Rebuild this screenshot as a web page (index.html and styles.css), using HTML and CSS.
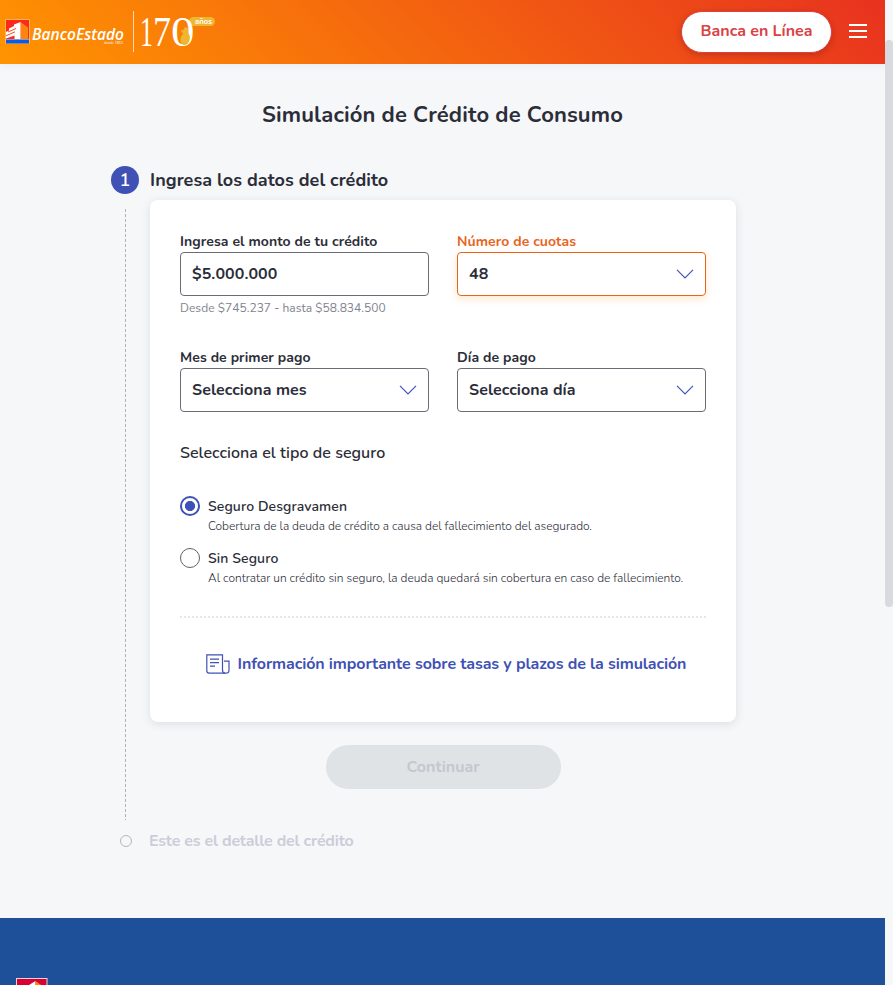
FILE: index.html
```html
<!DOCTYPE html>
<html lang="es">
<head>
<meta charset="utf-8">
<title>Simulación de Crédito de Consumo</title>
<link rel="stylesheet" href="styles.css">
</head>
<body>
<div class="page">
  <header class="topbar">
    <svg class="brand" width="220" height="64" viewBox="0 0 220 64">
      <rect x="5.500" y="19.500" width="24" height="24" fill="#ffd9b5"/>
      <rect x="6" y="20" width="23" height="19" fill="#fb2a1c"/>
      <rect x="6" y="39.500" width="23" height="4" fill="#0a5be0"/>
      <path d="M20.500 22 28 27.500V39h-7.500z" fill="#ff8310"/>
      <path d="M20.500 22v17h-6v-3.500L6 38.500V32l3-1.500v-2l5-2.500v-1.500z" fill="#fff"/>
      <path d="M6 35.800l9-4M8 32l8-3.500" stroke="#fb4a20" stroke-width="1"/>
      <text class="brand-name" x="32" y="39.500" textLength="92" lengthAdjust="spacingAndGlyphs">BancoEstado</text>
      <text class="brand-since" x="104" y="44" textLength="19" lengthAdjust="spacingAndGlyphs">desde 1855</text>
      <path d="M133.500 11v41" stroke="#ffd9ac"/>
      <rect x="189" y="17" width="26" height="9" rx="4.500" fill="#efb632"/>
      <g class="brand-years">
        <text x="140" y="46" textLength="13" lengthAdjust="spacingAndGlyphs">1</text>
        <text x="153" y="46" textLength="18" lengthAdjust="spacingAndGlyphs">7</text>
        <text x="171" y="46" textLength="23.500" lengthAdjust="spacingAndGlyphs">0</text>
      </g>
      <path d="M180.500 30.500l3-.5c.3-2 1.500-3 3-2.500 2 .5 2.500 3 1 5 2.500 2 3 5 2 8-1 3-3 4.500-5 4.500-3 0-4.500-3-4-6 .2-2 1.500-4 3-5.500-1-.3-1.500-1-1.500-1.500z" fill="#efb632"/>
      <text class="brand-age" x="195" y="24" textLength="17" lengthAdjust="spacingAndGlyphs">años</text>
    </svg>
    <div class="topbar-actions">
      <button class="bank-button">Banca en Línea</button>
      <svg width="18" height="14" viewBox="0 0 18 14"><path d="M0 1h18M0 7h18M0 13h18" stroke="#fff" stroke-width="2"/></svg>
    </div>
  </header>

  <main class="main">
    <h1 class="title">Simulación de Crédito de Consumo</h1>
    <section class="step">
      <div class="rail">
        <span class="step-number">1</span>
        <span class="rail-line"></span>
      </div>
      <div class="step-body">
        <h2 class="step-title">Ingresa los datos del crédito</h2>
        <div class="card">
          <div class="fields">
            <div class="field">
              <span class="label">Ingresa el monto de tu crédito</span>
              <div class="control">$5.000.000</div>
              <span class="hint">Desde $745.237 - hasta $58.834.500</span>
            </div>
            <div class="field field-active">
              <span class="label">Número de cuotas</span>
              <div class="control">48<svg class="chevron" width="18" height="10" viewBox="0 0 18 10"><path d="M1 .8 9 8.800l8-8"/></svg></div>
            </div>
            <div class="field">
              <span class="label">Mes de primer pago</span>
              <div class="control">Selecciona mes<svg class="chevron" width="18" height="10" viewBox="0 0 18 10"><path d="M1 .8 9 8.800l8-8"/></svg></div>
            </div>
            <div class="field">
              <span class="label">Día de pago</span>
              <div class="control">Selecciona día<svg class="chevron" width="18" height="10" viewBox="0 0 18 10"><path d="M1 .8 9 8.800l8-8"/></svg></div>
            </div>
          </div>
          <h3 class="subtitle">Selecciona el tipo de seguro</h3>
          <div class="options">
            <div class="option">
              <span class="radio radio-on"></span>
              <div>
                <div class="option-name">Seguro Desgravamen</div>
                <div class="option-text option-text-first">Cobertura de la deuda de crédito a causa del fallecimiento del asegurado.</div>
              </div>
            </div>
            <div class="option">
              <span class="radio"></span>
              <div>
                <div class="option-name">Sin Seguro</div>
                <div class="option-text">Al contratar un crédito sin seguro, la deuda quedará sin cobertura en caso de fallecimiento.</div>
              </div>
            </div>
          </div>
          <div class="divider"></div>
          <div class="info">
            <svg width="24" height="20" viewBox="0 0 24 20" fill="none" stroke="#3f51b5" stroke-width="1.200">
              <path d="M16.500 16V.8H.8v16c0 1.500 1 2.400 2.400 2.400h16.600c2 0 3.200-1.200 3.200-3V7.200h-5"/>
              <path d="M16.500 16c0 2 1 3.200 2.500 3.200M4 5.200h9M4 8.700h9M4 12.200h5"/>
            </svg>
            <span>Información importante sobre tasas y plazos de la simulación</span>
          </div>
        </div>
        <button class="continue">Continuar</button>
      </div>
    </section>
    <section class="next-step">
      <span class="next-dot"></span>
      <span class="next-title">Este es el detalle del crédito</span>
    </section>
  </main>

  <footer class="footer">
    <svg width="32" height="32" viewBox="0 0 32 32">
      <rect x=".5" y=".5" width="30.500" height="31" fill="#d8002f" stroke="#e8d5e4"/>
      <path d="M19.500 3 9 9.500V26h10.500z" fill="#fff"/>
      <path d="M19.500 3 28 9v17h-8.500z" fill="#ff8310"/>
    </svg>
  </footer>
</div>
<div class="scrollbar"><div class="thumb"></div></div>
</body>
</html>
```
FILE: styles.css
```css
* { box-sizing: border-box; }
body {
  margin: 0;
  height: 985px;
  overflow: hidden;
  display: flex;
  background: #f6f7f9;
  color: #2b2d38;
  font-family: Nunito, Lato, sans-serif;
}
h1, h2, h3 { margin: 0; }
button { font: inherit; padding: 0; }
svg { display: block; flex: none; }

.page { width: 885px; height: 985px; display: flex; flex-direction: column; }

.topbar {
  height: 64px;
  flex: none;
  display: flex;
  justify-content: space-between;
  background: linear-gradient(45deg, #ff9400 0%, #e8321f 100%);
  box-shadow: 0 2px 8px rgba(60, 70, 90, .06);
}
.topbar-actions { display: flex; align-items: center; gap: 17px; padding-right: 18px; height: 64px; }
.topbar-actions svg { margin-top: -2px; }
.brand text { fill: #fff; }
.brand-name { font: italic 600 15.5px "Open Sans", sans-serif; }
.brand-since { font: italic 4px "Open Sans", sans-serif; }
.brand-years { font: 43px "Liberation Serif", serif; }
.brand-age { font: 700 8px Nunito, sans-serif; }
.bank-button {
  width: 151px;
  height: 42px;
  padding-bottom: 3px;
  border: 1px solid #da4144;
  border-radius: 21px;
  background: #fff;
  color: #da4144;
  font-size: 16px;
  font-weight: 700;
  box-shadow: 0 2px 6px rgba(120, 20, 10, .35);
}

.main { height: 854px; flex: none; padding-top: 36px; }
.title {
  height: 30px;
  line-height: 30px;
  text-align: center;
  font-size: 22px;
  letter-spacing: .14px;
}
.step { display: flex; gap: 11px; margin: 36px 0 0 111px; height: 654px; }
.rail { width: 28px; display: flex; flex-direction: column; align-items: center; }
.step-number {
  width: 28px;
  height: 28px;
  border-radius: 50%;
  background: #3f51b5;
  color: #fff;
  font-size: 18px;
  font-weight: 600;
  line-height: 28px;
  text-align: center;
}
.rail-line {
  width: 1px;
  height: 611px;
  margin: 15px 0 0;
  background: repeating-linear-gradient(#b2b3b7 0 3px, transparent 3px 5px);
}
.step-body { width: 586px; display: flex; flex-direction: column; align-items: center; }
.step-title { align-self: flex-start; font-size: 18px; line-height: 28px; letter-spacing: .05px; }
.card {
  width: 586px;
  height: 522px;
  margin-top: 6px;
  padding: 32px 30px 0;
  border-radius: 8px;
  background: #fff;
  box-shadow: 0 2px 10px rgba(50, 60, 70, .13);
}
.fields { display: grid; grid-template-columns: 249px 249px; grid-template-rows: 116px 64px; column-gap: 28px; }
.field { display: flex; flex-direction: column; }
.label { font-size: 14px; font-weight: 700; line-height: 20px; letter-spacing: .07px; }
.control {
  height: 44px;
  padding: 0 11px;
  border: 1px solid #696b75;
  border-radius: 4px;
  display: flex;
  align-items: center;
  justify-content: space-between;
  font-size: 16px;
  font-weight: 700;
  letter-spacing: .07px;
}
.field-active .label { color: #e9641b; }
.field-active .control { border-color: #e9641b; box-shadow: 0 3px 8px rgba(255, 145, 30, .22); }
.chevron path { fill: none; stroke: #4253b6; stroke-width: 1.2; }
.hint { height: 24px; line-height: 24px; font-size: 12px; letter-spacing: .03px; color: #7f828e; }
.subtitle { margin-top: 29px; line-height: 24px; font-size: 16px; font-weight: 600; letter-spacing: .04px; }
.options { margin-top: 31px; display: flex; flex-direction: column; gap: 12px; }
.option { display: flex; gap: 8px; height: 40px; }
.radio { width: 20px; height: 20px; border: 1px solid #60626b; border-radius: 50%; }
.radio-on { border: 2px solid #3f51b5; background: radial-gradient(circle, #3f51b5 4.7px, #fff 5.4px); }
.option-name { padding-top: 1px; font-size: 14px; font-weight: 600; line-height: 20px; letter-spacing: .1px; }
.option-text { margin-top: -1px; font-size: 12px; font-weight: 300; line-height: 20px; letter-spacing: -.02px; }
.option-text-first { letter-spacing: -.04px; }
.divider {
  height: 2px;
  margin-top: 28px;
  background: repeating-linear-gradient(90deg, #e6e6ef 0 2px, transparent 2px 4px);
}
.info {
  height: 24px;
  margin: 34px 0 0 26px;
  display: flex;
  align-items: center;
  gap: 7.5px;
  white-space: nowrap;
  color: #3f51b5;
  font-size: 16px;
  font-weight: 700;
  letter-spacing: -.08px;
}
.continue {
  width: 235px;
  height: 44px;
  margin-top: 23px;
  border: 0;
  border-radius: 22px;
  background: #e0e3e6;
  color: #c4c7d0;
  font-size: 16px;
  font-weight: 700;
}
.next-step { height: 24px; margin: 9px 0 0 120px; display: flex; align-items: center; gap: 17px; }
.next-dot { width: 12px; height: 12px; border: 1px solid #b5b6ba; border-radius: 50%; }
.next-title { font-size: 16px; font-weight: 700; letter-spacing: -.2px; color: #cbced8; }

.footer { flex: 1; padding: 60px 0 0 16px; overflow: hidden; background: #1d5099; }
.scrollbar { width: 8px; height: 985px; padding-top: 40px; background: #f6f7f9; }
.thumb { height: 567px; border-radius: 4px; background: #d9dae0; }
```
